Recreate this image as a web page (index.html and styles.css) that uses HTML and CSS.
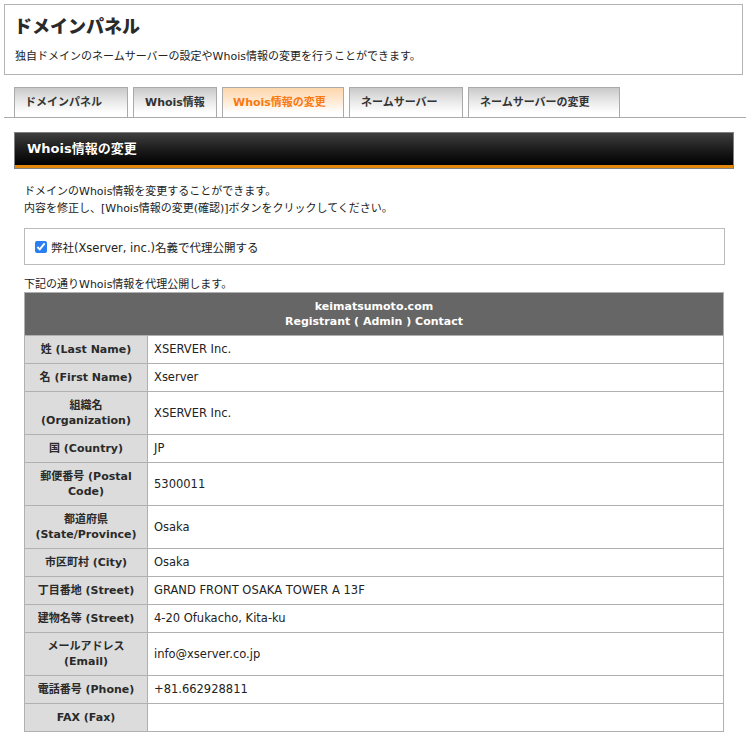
FILE: index.html
```html
<!DOCTYPE html>
<html lang="ja">
<head>
<meta charset="utf-8">
<title>ドメインパネル</title>
<link rel="stylesheet" href="styles.css">
</head>
<body>
<div class="page-head">
  <h1 class="page-title">ドメインパネル</h1>
  <p class="page-lead">独自ドメインのネームサーバーの設定やWhois情報の変更を行うことができます。</p>
</div>

<ul class="tabs">
  <li class="tab tab-w1">ドメインパネル</li>
  <li class="tab tab-w2">Whois情報</li>
  <li class="tab tab-w3 is-active">Whois情報の変更</li>
  <li class="tab tab-w4">ネームサーバー</li>
  <li class="tab tab-w5">ネームサーバーの変更</li>
</ul>

<div class="section">
  <h2 class="section-title">Whois情報の変更</h2>
  <div class="section-body">
    <p class="desc">ドメインのWhois情報を変更することができます。<br>内容を修正し、[Whois情報の変更(確認)]ボタンをクリックしてください。</p>

    <div class="proxy-box">
      <label class="proxy-label"><input type="checkbox" class="proxy-check" checked>弊社(Xserver, inc.)名義で代理公開する</label>
    </div>

    <p class="note">下記の通りWhois情報を代理公開します。</p>

    <table class="whois">
      <colgroup>
        <col class="col-lbl">
        <col class="col-val">
      </colgroup>
      <thead>
        <tr><th colspan="2" class="whois-head">keimatsumoto.com<br>Registrant ( Admin ) Contact</th></tr>
      </thead>
      <tbody>
        <tr><th class="lbl">姓 (Last Name)</th><td class="val">XSERVER Inc.</td></tr>
        <tr><th class="lbl">名 (First Name)</th><td class="val">Xserver</td></tr>
        <tr><th class="lbl">組織名<br>(Organization)</th><td class="val">XSERVER Inc.</td></tr>
        <tr><th class="lbl">国 (Country)</th><td class="val">JP</td></tr>
        <tr><th class="lbl">郵便番号 (Postal Code)</th><td class="val">5300011</td></tr>
        <tr><th class="lbl">都道府県<br>(State/Province)</th><td class="val">Osaka</td></tr>
        <tr><th class="lbl">市区町村 (City)</th><td class="val">Osaka</td></tr>
        <tr><th class="lbl">丁目番地 (Street)</th><td class="val">GRAND FRONT OSAKA TOWER A 13F</td></tr>
        <tr><th class="lbl">建物名等 (Street)</th><td class="val">4-20 Ofukacho, Kita-ku</td></tr>
        <tr><th class="lbl">メールアドレス<br>(Email)</th><td class="val">info@xserver.co.jp</td></tr>
        <tr><th class="lbl">電話番号 (Phone)</th><td class="val">+81.662928811</td></tr>
        <tr><th class="lbl">FAX (Fax)</th><td class="val"></td></tr>
      </tbody>
    </table>
  </div>
</div>
</body>
</html>
```

FILE: styles.css
```css
html, body {
  margin: 0;
  padding: 0;
  background: #fff;
}
body {
  font-family: "DejaVu Sans", "Noto Sans CJK JP", sans-serif;
  font-size: 11px;
  color: #333;
}

/* page header */
.page-head {
  margin: 4px 3px 0 4px;
  border: 1px solid #b4b4b4;
  padding: 10px 10px 9px 9px;
}
.page-title {
  margin: 0;
  font-size: 18px;
  line-height: 24px;
  font-weight: 900;
  color: #2a2a2a;
}
.page-lead {
  margin: 10px 0 0 1px;
  line-height: 16px;
  color: #222;
}

/* tabs */
.tabs {
  list-style: none;
  margin: 12px 0 0 4px;
  padding: 0 0 0 10px;
  display: flex;
  gap: 5px;
  border-bottom: 1px solid #aaa;
}
.tab {
  box-sizing: border-box;
  height: 30px;
  line-height: 29px;
  padding: 0 0 0 10px;
  border: 1px solid #aaa;
  border-bottom: none;
  background: linear-gradient(#c9c9c9 0%, #e8e8e8 45%, #fff 85%);
  font-weight: bold;
  color: #333;
  white-space: nowrap;
}
.tab-w1 { width: 114px; }
.tab-w2 { width: 84px; padding-left: 11px; }
.tab-w3 { width: 122px; }
.tab-w4 { width: 114px; padding-left: 11px; }
.tab-w5 { width: 152px; padding-left: 11px; }
.tab.is-active {
  background: linear-gradient(#fdd7ad 0%, #fee9d3 45%, #fff 85%);
  color: #f87a10;
}

/* section */
.section {
  margin: 14px 12px 0 14px;
}
.section-title {
  margin: 0;
  height: 35px;
  border: 1px solid #808080;
  background: linear-gradient(#3e3e3e 0%, #1a1a1a 50%, #000 calc(100% - 3px), #e0870c calc(100% - 3px), #e0870c 100%);
  color: #fff;
  font-size: 13px;
  font-weight: bold;
  line-height: 32px;
  padding-left: 12px;
  text-shadow: 0 0 1px #000;
}
.section-body {
  padding: 14px 9px 0 10px;
}
.desc {
  margin: 0;
  line-height: 17px;
  color: #222;
}
.proxy-box {
  margin-top: 11px;
  border: 1px solid #bbb;
  height: 35px;
  display: flex;
  align-items: center;
  padding-left: 10px;
}
.proxy-label {
  display: flex;
  align-items: center;
  color: #222;
  font-size: 11.5px;
}
.proxy-check {
  width: 12px;
  height: 12px;
  margin: 0 4px 0 0;
  accent-color: #2a7ef2;
}
.note {
  margin: 12px 0 0;
  line-height: 15px;
  color: #222;
}

/* table */
.whois {
  width: 700px;
  border-collapse: collapse;
  table-layout: fixed;
}
.col-lbl { width: 123px; }
.whois th, .whois td {
  border: 1px solid #b0b0b0;
  padding: 6px 6px;
  line-height: 15px;
  font-size: 11px;
}
.whois-head {
  background: #666;
  color: #fff;
  font-weight: bold;
  text-align: center;
}
.lbl {
  background: #dcdcdc;
  color: #2a2a2a;
  font-weight: bold;
  text-align: center;
}
.whois .val {
  background: #fff;
  color: #222;
  text-align: left;
  height: 15px;
  font-size: 11.5px;
}
```
